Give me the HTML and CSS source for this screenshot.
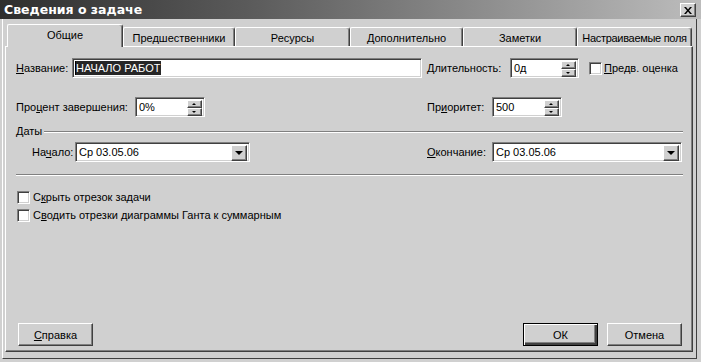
FILE: index.html
```html
<!DOCTYPE html>
<html lang="ru">

<head>
    <meta charset="UTF-8">
    <title>Сведения о задаче</title>
    <link rel="stylesheet" href="styles.css">
</head>

<body>
    <div class="window">
        <div class="titlebar">
            <span class="title">Сведения о задаче</span>
            <span class="close">
                <svg width="8" height="7" viewBox="0 0 8 7">
                    <path d="M0 0h2l2 2.5l2-2.5h2l-3 3.5l3 3.5h-2l-2-2.5l-2 2.5h-2l3-3.5z" fill="#000"/>
                </svg>
            </span>
        </div>

        <div class="frame">
            <div class="tabs">
                <div class="tab valgt t1">Общие</div>
                <div class="tab t2">Предшественники</div>
                <div class="tab t3">Ресурсы</div>
                <div class="tab t4">Дополнительно</div>
                <div class="tab t5">Заметки</div>
                <div class="tab t6">Настраиваемые поля</div>
            </div>

            <div class="panel">
                <div class="row r1">
                    <div class="left">
                        <span class="lbl l-name"><u>Н</u>азвание:</span>
                        <span class="field f-name"><span class="sel">НАЧАЛО РАБОТ</span></span>
                    </div>
                    <div class="right">
                        <span class="lbl l-dur"><u>Д</u>лительность:</span>
                        <span class="field f-dur">0д
                            <span class="spin"><span class="up"></span><span class="down"></span></span>
                        </span>
                        <span class="check c-est"></span>
                        <span class="cap"><u>П</u>редв. оценка</span>
                    </div>
                </div>

                <div class="row r2">
                    <div class="left">
                        <span class="lbl l-pct">Про<u>ц</u>ент завершения:</span>
                        <span class="field f-small">0%
                            <span class="spin"><span class="up"></span><span class="down"></span></span>
                        </span>
                    </div>
                    <div class="right">
                        <span class="lbl l-prio">Пр<u>и</u>оритет:</span>
                        <span class="field f-small">500
                            <span class="spin"><span class="up"></span><span class="down"></span></span>
                        </span>
                    </div>
                </div>

                <div class="group">
                    <span>Даты</span>
                    <span class="etch"></span>
                </div>

                <div class="row r3">
                    <div class="left ind">
                        <span class="lbl l-start">На<u>ч</u>ало:</span>
                        <span class="field combo f-start">Ср 03.05.06
                            <span class="arrow"></span>
                        </span>
                    </div>
                    <div class="right">
                        <span class="lbl l-end"><u>О</u>кончание:</span>
                        <span class="field combo f-end">Ср 03.05.06
                            <span class="arrow"></span>
                        </span>
                    </div>
                </div>

                <div class="sep"></div>

                <div class="cbrow first">
                    <span class="check"></span>
                    <span class="cap">С<u>к</u>рыть отрезок задачи</span>
                </div>
                <div class="cbrow">
                    <span class="check"></span>
                    <span class="cap">С<u>в</u>одить отрезки диаграммы Ганта к суммарным</span>
                </div>

                <div class="buttons">
                    <button class="btn"><u>С</u>правка</button>
                    <span class="spacer"></span>
                    <button class="btn default">ОК</button>
                    <button class="btn">Отмена</button>
                </div>
            </div>
        </div>
    </div>
</body>

</html>
```

FILE: styles.css
```css
* {
    box-sizing: border-box;
}

body {
    margin: 0;
    background-color: #d0d0d0;
    font-family: "Liberation Sans", Arial, sans-serif;
    font-size: 11px;
    color: #000;
}

u {
    text-decoration: underline;
    text-underline-offset: 1px;
}

.window {
    width: 701px;
    height: 362px;
    background-color: #d0d0d0;
    display: flex;
    flex-direction: column;
}

/* titlebar */
.titlebar {
    height: 19px;
    background: linear-gradient(to right, #2e2e2e, #5a5a5a 35%, #bcbcbc);
    display: flex;
    align-items: center;
    justify-content: space-between;
    padding: 0 5px 0 4px;
}

.title {
    color: #fff;
    font-family: "DejaVu Sans", sans-serif;
    font-weight: bold;
    font-size: 12.5px;
}

.close {
    width: 16px;
    height: 14px;
    background-color: #d0d0d0;
    border: 1px solid;
    border-color: #fff #404040 #404040 #fff;
    box-shadow: inset -1px -1px 0 #808080;
    display: flex;
    align-items: center;
    justify-content: center;
    margin-top: 1px;
}

/* frame */
.frame {
    flex: 1;
    margin: 0 4px 3px 2px;
    border-left: 1px solid #fff;
    border-right: 1px solid #404040;
    border-bottom: 1px solid #404040;
    padding: 5px 3px 6px 2px;
    display: flex;
    flex-direction: column;
}

.tabs {
    height: 22px;
    display: flex;
    align-items: flex-end;
    padding-left: 2px;
}

.tab {
    height: 19px;
    border: 1px solid;
    border-bottom: none;
    border-color: #fff #404040 #fff #fff;
    border-radius: 2px 3px 0 0;
    box-shadow: inset -1px 0 0 #808080;
    display: flex;
    align-items: center;
    justify-content: center;
    padding-top: 1px;
    white-space: nowrap;
    overflow: hidden;
}

.tab.valgt {
    height: 23px;
    margin-bottom: -1px;
    position: relative;
    z-index: 1;
    background-color: #d0d0d0;
    padding-bottom: 3px;
}

.t1 { width: 116px; }
.t2 { width: 112px; }
.t3 { width: 115px; }
.t4 { width: 113px; }
.t5 { width: 114px; }
.t6 {
    width: 115px;
    letter-spacing: -0.3px;
}

/* panel */
.panel {
    flex: 1;
    border: 1px solid;
    border-color: #fff #404040 #404040 #fff;
    box-shadow: inset -1px -1px 0 #808080;
    padding: 0 0 5px 10px;
    display: flex;
    flex-direction: column;
}

.row {
    display: flex;
    height: 20px;
}

.r1 { margin-top: 11px; }
.r2 { margin-top: 19px; }
.r3 { margin-top: 4px; }

.left {
    width: 411px;
    display: flex;
    align-items: center;
}

.left.ind {
    padding-left: 16px;
}

.right {
    display: flex;
    align-items: center;
}

.lbl {
    white-space: nowrap;
}

.l-name { width: 56px; }
.l-dur { width: 83px; }
.l-pct { width: 119px; }
.l-prio { width: 65px; }
.l-start { width: 43px; }
.l-end { width: 65px; }

.field {
    position: relative;
    height: 20px;
    background-color: #fff;
    border: 1px solid;
    border-color: #808080 #fff #fff #808080;
    box-shadow: inset 1px 1px 0 #404040, inset -1px -1px 0 #d0d0d0;
    padding: 0 3px;
    display: flex;
    align-items: center;
    white-space: nowrap;
}

.f-name {
    width: 350px;
    padding-left: 2px;
}

.sel {
    background-color: #262626;
    color: #fff;
    border-left: 1px solid #000;
    line-height: 14px;
    padding-right: 1px;
}

.f-dur { width: 69px; }
.f-small { width: 70px; }
.f-start { width: 175px; }
.f-end { width: 190px; }

.spin {
    position: absolute;
    right: 2px;
    top: 2px;
    width: 15px;
    height: 16px;
    display: flex;
    flex-direction: column;
}

.spin span,
.arrow {
    flex: 1;
    background-color: #d0d0d0;
    border: 1px solid;
    border-color: #fff #404040 #404040 #fff;
    box-shadow: inset -1px -1px 0 #808080;
    position: relative;
}

.spin span::after {
    content: "";
    position: absolute;
    left: 4px;
    top: 2px;
    border-left: 2px solid transparent;
    border-right: 2px solid transparent;
}

.spin .up::after {
    border-bottom: 2px solid #000;
}

.spin .down::after {
    border-top: 2px solid #000;
}

.arrow {
    position: absolute;
    right: 2px;
    top: 2px;
    width: 16px;
    height: 16px;
}

.arrow::after {
    content: "";
    position: absolute;
    left: 3px;
    top: 5px;
    border-left: 4px solid transparent;
    border-right: 4px solid transparent;
    border-top: 4px solid #000;
}

.check {
    width: 13px;
    height: 13px;
    background-color: #fff;
    border: 1px solid;
    border-color: #808080 #fff #fff #808080;
    box-shadow: inset 1px 1px 0 #404040, inset -1px -1px 0 #d0d0d0;
    flex: none;
}

.c-est {
    margin-left: 10px;
    margin-right: 2px;
}

.group {
    margin-top: 7px;
    height: 14px;
    display: flex;
    align-items: center;
    padding-right: 9px;
}

.etch {
    flex: 1;
    height: 2px;
    border-top: 1px solid #808080;
    border-bottom: 1px solid #fff;
    margin-left: 2px;
    margin-top: 1px;
}

.sep {
    margin-top: 12px;
    margin-right: 9px;
    height: 2px;
    border-top: 1px solid #808080;
    border-bottom: 1px solid #fff;
}

.cbrow {
    height: 16px;
    display: flex;
    align-items: center;
    gap: 3px;
    margin-top: 2px;
    padding-left: 1px;
}

.cbrow.first {
    margin-top: 13px;
}

.buttons {
    margin-top: auto;
    display: flex;
    padding-left: 2px;
    padding-right: 10px;
    gap: 9px;
}

.spacer {
    flex: 1;
}

.btn {
    width: 75px;
    height: 23px;
    font: inherit;
    color: #000;
    background-color: #d0d0d0;
    border: 1px solid;
    border-color: #fff #404040 #404040 #fff;
    box-shadow: inset -1px -1px 0 #808080;
    padding: 0;
}

.btn.default {
    border: 1px solid #000;
    box-shadow: inset 1px 1px 0 #fff, inset -2px -2px 0 #404040, inset -3px -3px 0 #808080;
}
```
